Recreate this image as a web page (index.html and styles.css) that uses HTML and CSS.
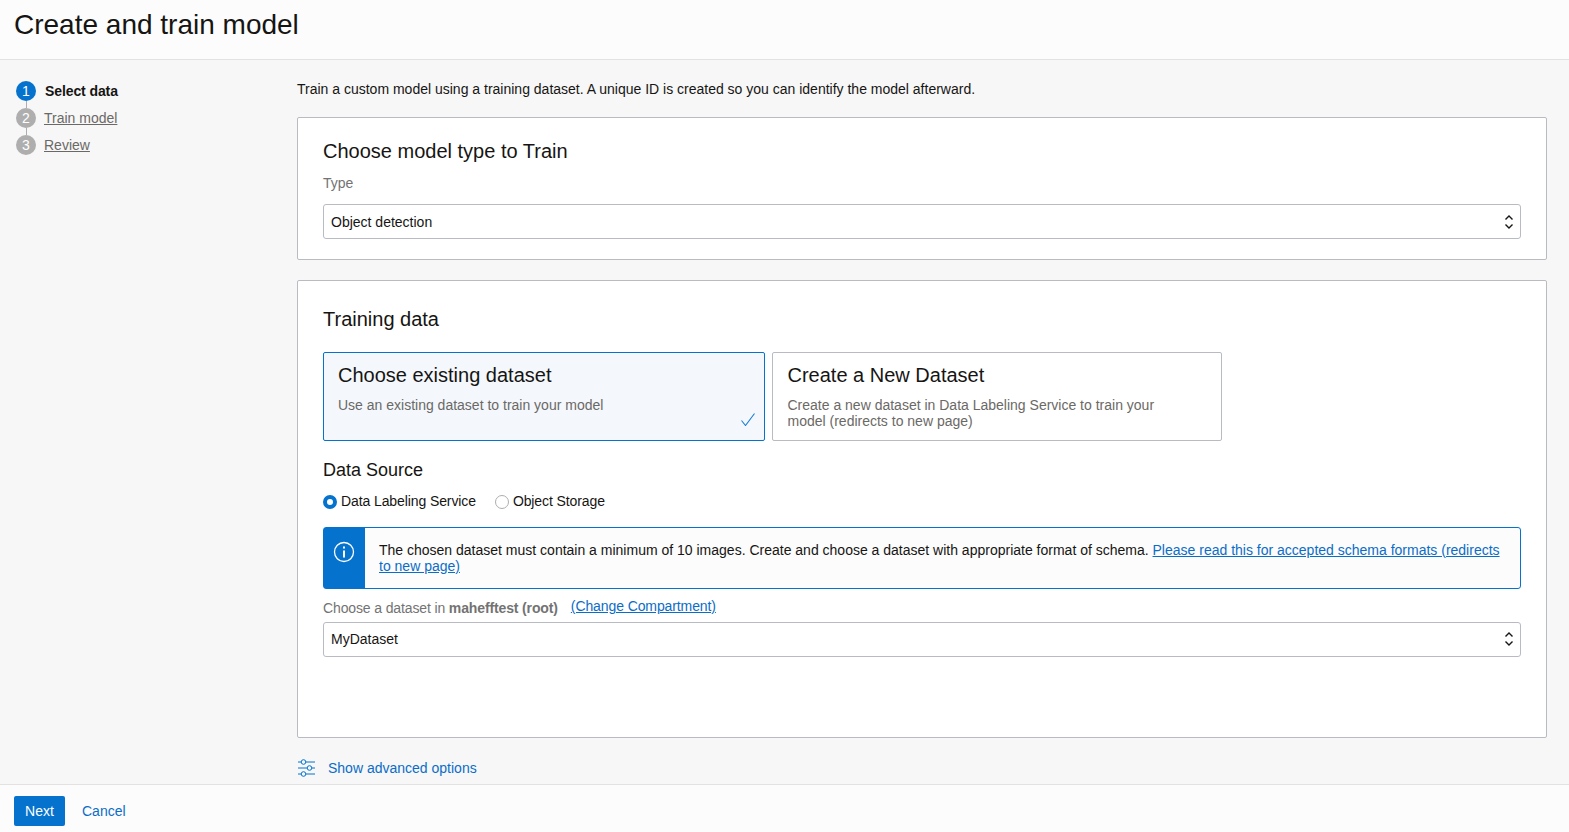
FILE: index.html
```html
<!DOCTYPE html>
<html>

<head>
    <link rel="stylesheet" href="styles.css">
</head>

<body>
    <div class="page-header">
        <h1>Create and train model</h1>
    </div>
    <div class="page-body">
        <div class="steps">
            <div class="step step-active">
                <span class="step-num">1</span>
                <span class="step-label">Select data</span>
            </div>
            <div class="step">
                <span class="step-num">2</span>
                <a href="#" class="step-link">Train model</a>
            </div>
            <div class="step">
                <span class="step-num">3</span>
                <a href="#" class="step-link">Review</a>
            </div>
        </div>
        <div class="main">
            <p class="intro">Train a custom model using a training dataset. A unique ID is created so you can identify the model afterward.</p>

            <div class="panel panel-type">
                <h2>Choose model type to Train</h2>
                <div class="field-label">Type</div>
                <div class="select">
                    <span>Object detection</span>
                    <svg class="select-arrows" width="10" height="16" viewBox="0 0 10 16">
                        <path d="M1.5 5.5 5 2l3.5 3.5M1.5 10.5 5 14l3.5-3.5" fill="none" stroke="#161513" stroke-width="1.4"/>
                    </svg>
                </div>
            </div>

            <div class="panel panel-data">
                <h2>Training data</h2>
                <div class="cards">
                    <div class="card card-selected">
                        <div class="card-title">Choose existing dataset</div>
                        <div class="card-text">Use an existing dataset to train your model</div>
                        <svg class="card-check" width="14" height="13" viewBox="0 0 14 13">
                            <path d="M.5 7.5l4 5L13.5.5" fill="none" stroke="#1b7fd4" stroke-width="1.1"/>
                        </svg>
                    </div>
                    <div class="card card-new">
                        <div class="card-title">Create a New Dataset</div>
                        <div class="card-text">Create a new dataset in Data Labeling Service to train your model (redirects to new page)</div>
                    </div>
                </div>

                <h3>Data Source</h3>
                <div class="radios">
                    <label class="radio"><span class="radio-dot radio-on"></span>Data Labeling Service</label>
                    <label class="radio"><span class="radio-dot"></span>Object Storage</label>
                </div>

                <div class="notice">
                    <div class="notice-icon">
                        <svg width="22" height="22" viewBox="0 0 22 22">
                            <circle cx="11" cy="11" r="9.5" fill="none" stroke="#fff" stroke-width="1.3"/>
                            <rect x="10" y="9.5" width="2" height="7" fill="#fff"/>
                            <rect x="10" y="5.5" width="2" height="2" fill="#fff"/>
                        </svg>
                    </div>
                    <div class="notice-text">The chosen dataset must contain a minimum of 10 images. Create and choose a dataset with appropriate format of schema. <a href="#">Please read this for accepted schema formats (redirects to new page)</a></div>
                </div>

                <div class="dataset-label">
                    <span>Choose a dataset in <b>mahefftest (root)</b></span>
                    <a href="#">(Change Compartment)</a>
                </div>
                <div class="select select-dataset">
                    <span>MyDataset</span>
                    <svg class="select-arrows" width="10" height="16" viewBox="0 0 10 16">
                        <path d="M1.5 5.5 5 2l3.5 3.5M1.5 10.5 5 14l3.5-3.5" fill="none" stroke="#161513" stroke-width="1.4"/>
                    </svg>
                </div>
            </div>

            <div class="advanced">
                <svg width="18" height="18" viewBox="0 0 18 18">
                    <g fill="none" stroke="#0572ce" stroke-width="1">
                        <path d="M1 3h3M9 3h9M1 9h9M15 9h3M1 15h3M9 15h9"/>
                        <circle cx="6.5" cy="3" r="2.3"/>
                        <circle cx="12.5" cy="9" r="2.3"/>
                        <circle cx="6.5" cy="15" r="2.3"/>
                    </g>
                </svg>
                <a href="#">Show advanced options</a>
            </div>
        </div>
    </div>
    <div class="page-footer">
        <button class="btn-next">Next</button>
        <a href="#" class="btn-cancel">Cancel</a>
    </div>
</body>

</html>
```
FILE: styles.css
```css
html, body {
    height: 100%;
}

body {
    font-family: 'Liberation Sans', Arial, sans-serif;
    font-size: 14px;
    color: #161513;
    background: #f7f7f7;
    margin: 0;
    display: flex;
    flex-direction: column;
    overflow: hidden;
}

a {
    color: #0b6dc7;
}

.page-header {
    height: 59px;
    flex: none;
    background: #fcfcfc;
    border-bottom: 1px solid #e4e2e0;
    padding-left: 14px;
}

h1 {
    margin: 0;
    font-size: 28px;
    font-weight: normal;
    line-height: 50px;
}

.page-body {
    flex: 1;
    display: flex;
    min-height: 0;
}

.steps {
    width: 297px;
    flex: none;
    padding: 21px 0 0 16px;
    box-sizing: border-box;
}

.step {
    display: flex;
    align-items: center;
    height: 20px;
    margin-bottom: 7px;
    position: relative;
}

.step + .step::before {
    content: "";
    position: absolute;
    left: 9.5px;
    top: -7px;
    height: 7px;
    width: 1px;
    background: #aeaeae;
}

.step-num {
    width: 20px;
    height: 20px;
    border-radius: 50%;
    background: #aeaeae;
    color: #fff;
    text-align: center;
    line-height: 20px;
    flex: none;
}

.step-active .step-num {
    background: #0572ce;
}

.step-label {
    font-weight: bold;
    margin-left: 9px;
    letter-spacing: -0.1px;
}

.step-link {
    color: #6b6966;
    margin-left: 8px;
}

.main {
    width: 1250px;
    flex: none;
}

.intro {
    margin: 21px 0 19px;
    line-height: 17px;
}

.panel {
    background: #fff;
    border: 1px solid #b8bcc2;
    border-radius: 2px;
    padding: 0 25px;
    box-sizing: border-box;
}

.panel-type {
    height: 143px;
    margin-bottom: 20px;
    padding-top: 21px;
}

.panel-data {
    height: 458px;
    padding-top: 26px;
}

h2 {
    margin: 0;
    font-size: 20px;
    font-weight: normal;
    line-height: 24px;
}

h3 {
    margin: 0;
    font-size: 18px;
    font-weight: normal;
    line-height: 22px;
}

.field-label {
    color: #737373;
    margin-top: 12px;
    line-height: 17px;
}

.select {
    height: 35px;
    box-sizing: border-box;
    border: 1px solid #b8bcc2;
    border-radius: 3px;
    display: flex;
    align-items: center;
    justify-content: space-between;
    padding: 0 6px 0 7px;
    background: #fff;
}

.select-dataset {
    padding-bottom: 2px;
}

.panel-type .select {
    margin-top: 12px;
}

.cards {
    display: flex;
    gap: 7px;
    margin-top: 21px;
}

.card {
    height: 89px;
    box-sizing: border-box;
    border: 1px solid #b8bcc2;
    border-radius: 2px;
    padding: 10px 14px;
    position: relative;
}

.card-selected {
    width: 442px;
    border-color: #0572ce;
    background: #f4f8fd;
}

.card-new {
    width: 450px;
}

.card-title {
    font-size: 20px;
    line-height: 24px;
}

.card-new .card-title,
.card-new .card-text {
    margin-left: 0.5px;
}

.card-text {
    color: #6b6966;
    line-height: 16px;
    margin-top: 10px;
    max-width: 400px;
}

.card-check {
    position: absolute;
    right: 9px;
    bottom: 14px;
}

.panel-data h3 {
    margin-top: 18px;
}

.radios {
    display: flex;
    gap: 19px;
    margin-top: 12px;
}

.radio {
    display: flex;
    align-items: center;
    gap: 4px;
    line-height: 17px;
    letter-spacing: -0.1px;
}

.radio-dot {
    width: 14px;
    height: 14px;
    box-sizing: border-box;
    border: 1px solid #aeaeae;
    border-radius: 50%;
    background: #fff;
}

.radio-on {
    border: 4px solid #0572ce;
}

.notice {
    display: flex;
    height: 62px;
    box-sizing: border-box;
    margin-top: 17px;
    border: 1px solid #0572ce;
    border-radius: 3px;
    background: #fcfcfc;
}

.notice-icon {
    width: 41px;
    flex: none;
    background: #0572ce;
    display: flex;
    justify-content: center;
    padding: 13px 2px 0 0;
    box-sizing: border-box;
}

.notice-text {
    padding: 14px 14px 0;
    line-height: 16px;
}

.dataset-label {
    display: flex;
    gap: 13px;
    margin-top: 9px;
    height: 24px;
    line-height: 20px;
    color: #737373;
}

.dataset-label span {
    letter-spacing: -0.13px;
}

.dataset-label a {
    margin-top: -2px;
    letter-spacing: -0.1px;
}

.advanced {
    display: flex;
    align-items: center;
    gap: 13px;
    margin-top: 21px;
}

.advanced a {
    text-decoration: none;
}

.page-footer {
    height: 48px;
    flex: none;
    box-sizing: border-box;
    background: #fcfcfc;
    border-top: 1px solid #e4e2e0;
    display: flex;
    align-items: center;
    gap: 17px;
    padding: 5px 0 0 14px;
}

.btn-next {
    width: 51px;
    height: 30px;
    border: none;
    border-radius: 2px;
    background: #0572ce;
    color: #fff;
    font: 14px 'Liberation Sans', Arial, sans-serif;
    padding: 0;
}

.btn-cancel {
    text-decoration: none;
}
```
